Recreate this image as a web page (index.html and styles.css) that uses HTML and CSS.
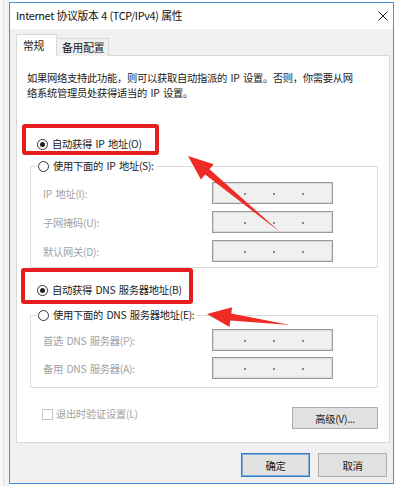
FILE: index.html
```html
<!DOCTYPE html>
<html lang="zh-CN">
<head>
<meta charset="utf-8">
<title>Internet 协议版本 4 (TCP/IPv4) 属性</title>
<link rel="stylesheet" href="styles.css">
</head>
<body>
<div class="page">
  <div class="strip"></div>
  <div class="window">
    <div class="titlebar">
      <span class="title">Internet 协议版本 4 (TCP/IPv4) 属性</span>
      <svg class="close" width="10" height="10" viewBox="0 0 10 10"><path d="M0.5 0.5 L9.5 9.5 M9.5 0.5 L0.5 9.5" stroke="#222" stroke-width="1" fill="none"/></svg>
    </div>
    <div class="body">
      <div class="tabs">
        <div class="tab active">常规</div>
        <div class="tab">备用配置</div>
      </div>
      <div class="panel">
        <p class="desc">如果网络支持此功能，则可以获取自动指派的 IP 设置。否则，你需要从网<br>络系统管理员处获得适当的 IP 设置。</p>

        <div class="radio-row first"><span class="radio checked"></span><span>自动获得 IP 地址(O)</span></div>

        <fieldset class="group g1">
          <legend><span class="radio"></span><span>使用下面的 IP 地址(S):</span></legend>
          <div class="fields">
            <div class="field"><span class="lbl">IP 地址(I):</span><span class="ipbox"><i></i><i></i><i></i></span></div>
            <div class="field"><span class="lbl">子网掩码(U):</span><span class="ipbox"><i></i><i></i><i></i></span></div>
            <div class="field"><span class="lbl">默认网关(D):</span><span class="ipbox"><i></i><i></i><i></i></span></div>
          </div>
        </fieldset>

        <div class="radio-row dns"><span class="radio checked"></span><span>自动获得 DNS 服务器地址(B)</span></div>

        <fieldset class="group g2">
          <legend><span class="radio"></span><span>使用下面的 DNS 服务器地址(E):</span></legend>
          <div class="fields">
            <div class="field"><span class="lbl">首选 DNS 服务器(P):</span><span class="ipbox"><i></i><i></i><i></i></span></div>
            <div class="field"><span class="lbl">备用 DNS 服务器(A):</span><span class="ipbox"><i></i><i></i><i></i></span></div>
          </div>
        </fieldset>

        <div class="bottom-row">
          <div class="check"><span class="box"></span><span>退出时验证设置(L)</span></div>
          <div class="btn adv">高级(V)...</div>
        </div>
      </div>
      <div class="footer">
        <div class="btn ok">确定</div>
        <div class="btn">取消</div>
      </div>
    </div>
  </div>
</div>

<div class="mark m1"></div>
<div class="mark m2"></div>
<svg class="arrows" width="398" height="486" viewBox="0 0 398 486">
  <polygon fill="#ef2b26" points="188,156 200.9,179.6 205.1,174.6 280,232 209.5,169.2 213.7,164.2"/>
  <polygon fill="#ef2b26" points="207,314 229.5,327 230.3,320.6 290,325 231.3,313.6 232.1,307.2"/>
</svg>
</body>
</html>
```
FILE: styles.css
```css
* { box-sizing: border-box; }
html, body { margin: 0; padding: 0; background: #fff; }
body {
  width: 398px;
  height: 486px;
  position: relative;
  overflow: hidden;
  font-family: "Noto Sans CJK SC", "Noto Sans", sans-serif;
  font-size: 10.3px;
  letter-spacing: -0.3px;
  word-spacing: 1.5px;
  color: #1a1a1a;
}
.page {
  display: flex;
  align-items: flex-start;
  height: 486px;
}
.strip {
  width: 9px;
  height: 486px;
  background: #f3f3f3;
  border-left: 3px solid #fafafa;
  box-shadow: inset 1px 0 0 #e2e2e2;
}
.window {
  margin-top: 2px;
  width: 385px;
  height: 482px;
  border: 1px solid #4b90d2;
  display: flex;
  flex-direction: column;
  background: #f0f0f0;
}
.titlebar {
  height: 26px;
  background: #fff;
  display: flex;
  align-items: center;
  justify-content: space-between;
  padding: 0 5px 2px 6px;
}
.title {
  font-size: 10.8px;
  letter-spacing: -0.3px;
  word-spacing: 0.5px;
  line-height: 14px;
  color: #111;
}
.close { display: block; margin-top: 1px; }
.body {
  flex: 1;
  padding: 6px 3px 0 6px;
  display: flex;
  flex-direction: column;
}
.tabs {
  display: flex;
  align-items: flex-end;
  height: 21px;
  position: relative;
  z-index: 1;
  margin-bottom: -1px;
}
.tab {
  height: 18px;
  padding: 0 4px 0 5px;
  border: 1px solid #d9d9d9;
  border-bottom: none;
  border-left: none;
  background: #f0f0f0;
  line-height: 17px;
  font-size: 10.8px;
  letter-spacing: -0.2px;
}
.tab.active {
  height: 22px;
  width: 41px;
  background: #fff;
  border-left: 1px solid #d9d9d9;
  line-height: 20px;
  padding-left: 6px;
}
.panel {
  height: 388px;
  background: #fff;
  border: 1px solid #d9d9d9;
  display: flex;
  flex-direction: column;
}
.desc {
  margin: 14px 0 0 10px;
  line-height: 15px;
}
.radio-row {
  display: flex;
  align-items: center;
  height: 16px;
  margin-left: 20px;
  line-height: 16px;
}
.radio-row.first { margin-top: 36px; }
.radio-row.dns { margin-top: 14px; }
.radio {
  width: 11px;
  height: 11px;
  border: 1px solid #333;
  border-radius: 50%;
  margin-right: 4px;
  position: relative;
  flex: none;
  background: #fff;
  display: inline-block;
}
.radio.checked::after {
  content: "";
  position: absolute;
  left: 2px;
  top: 2px;
  width: 5px;
  height: 5px;
  border-radius: 50%;
  background: #222;
}
.group {
  margin: 6px 11px 0 13px;
  padding: 0 0 0 12px;
  border: 1px solid #dcdcdc;
  min-width: 0;
}
.group legend {
  display: flex;
  align-items: center;
  height: 16px;
  line-height: 16px;
  margin-left: -6px;
  padding: 0 2px 0 1px;
}
.g1 { padding-bottom: 5px; }
.g2 { margin-top: 9px; padding-bottom: 8px; }
.fields {
  display: flex;
  flex-direction: column;
  gap: 7px;
}
.g1 .fields { margin-top: 8px; }
.g2 .fields { margin-top: 6px; gap: 6px; }
.field {
  display: grid;
  grid-template-columns: 169px 121px;
  align-items: center;
  height: 22px;
}
.lbl { color: #a2a2a2; }
.ipbox {
  height: 22px;
  border: 1px solid #999;
  background: #f0f0f0;
  box-shadow: inset 0 0 0 1px #dadada;
  display: flex;
  align-items: center;
  padding-left: 31px;
  gap: 27px;
}
.ipbox i {
  width: 2px;
  height: 2px;
  background: #8a8a8a;
  display: block;
  margin-top: 1px;
}
.bottom-row {
  display: flex;
  justify-content: space-between;
  align-items: flex-start;
  margin: 19px 11px 0 25px;
}
.check {
  display: flex;
  align-items: center;
  height: 14px;
  line-height: 14px;
  color: #a2a2a2;
}
.check .box {
  width: 11px;
  height: 11px;
  border: 1px solid #c6c6c6;
  background: #fff;
  margin-right: 3px;
}
.btn {
  height: 23px;
  background: #e1e1e1;
  border: 1px solid #adadad;
  display: flex;
  align-items: center;
  justify-content: center;
  color: #1a1a1a;
}
.btn.adv { width: 86px; height: 22px; }
.footer {
  display: flex;
  justify-content: flex-end;
  gap: 8px;
  margin-top: 10px;
  padding-right: 3px;
}
.footer .btn { width: 69px; height: 24px; }
.btn.ok {
  border: 1px solid #2f7bc4;
  box-shadow: inset 0 0 0 1px #7fb0de;
}
.mark {
  position: absolute;
  border: 4px solid #e61d1d;
  border-radius: 3px;
}
.m1 { left: 22px; top: 124px; width: 137px; height: 31px; }
.m2 { left: 21px; top: 268px; width: 172px; height: 36px; }
.arrows {
  position: absolute;
  left: 0;
  top: 0;
  pointer-events: none;
}
```
